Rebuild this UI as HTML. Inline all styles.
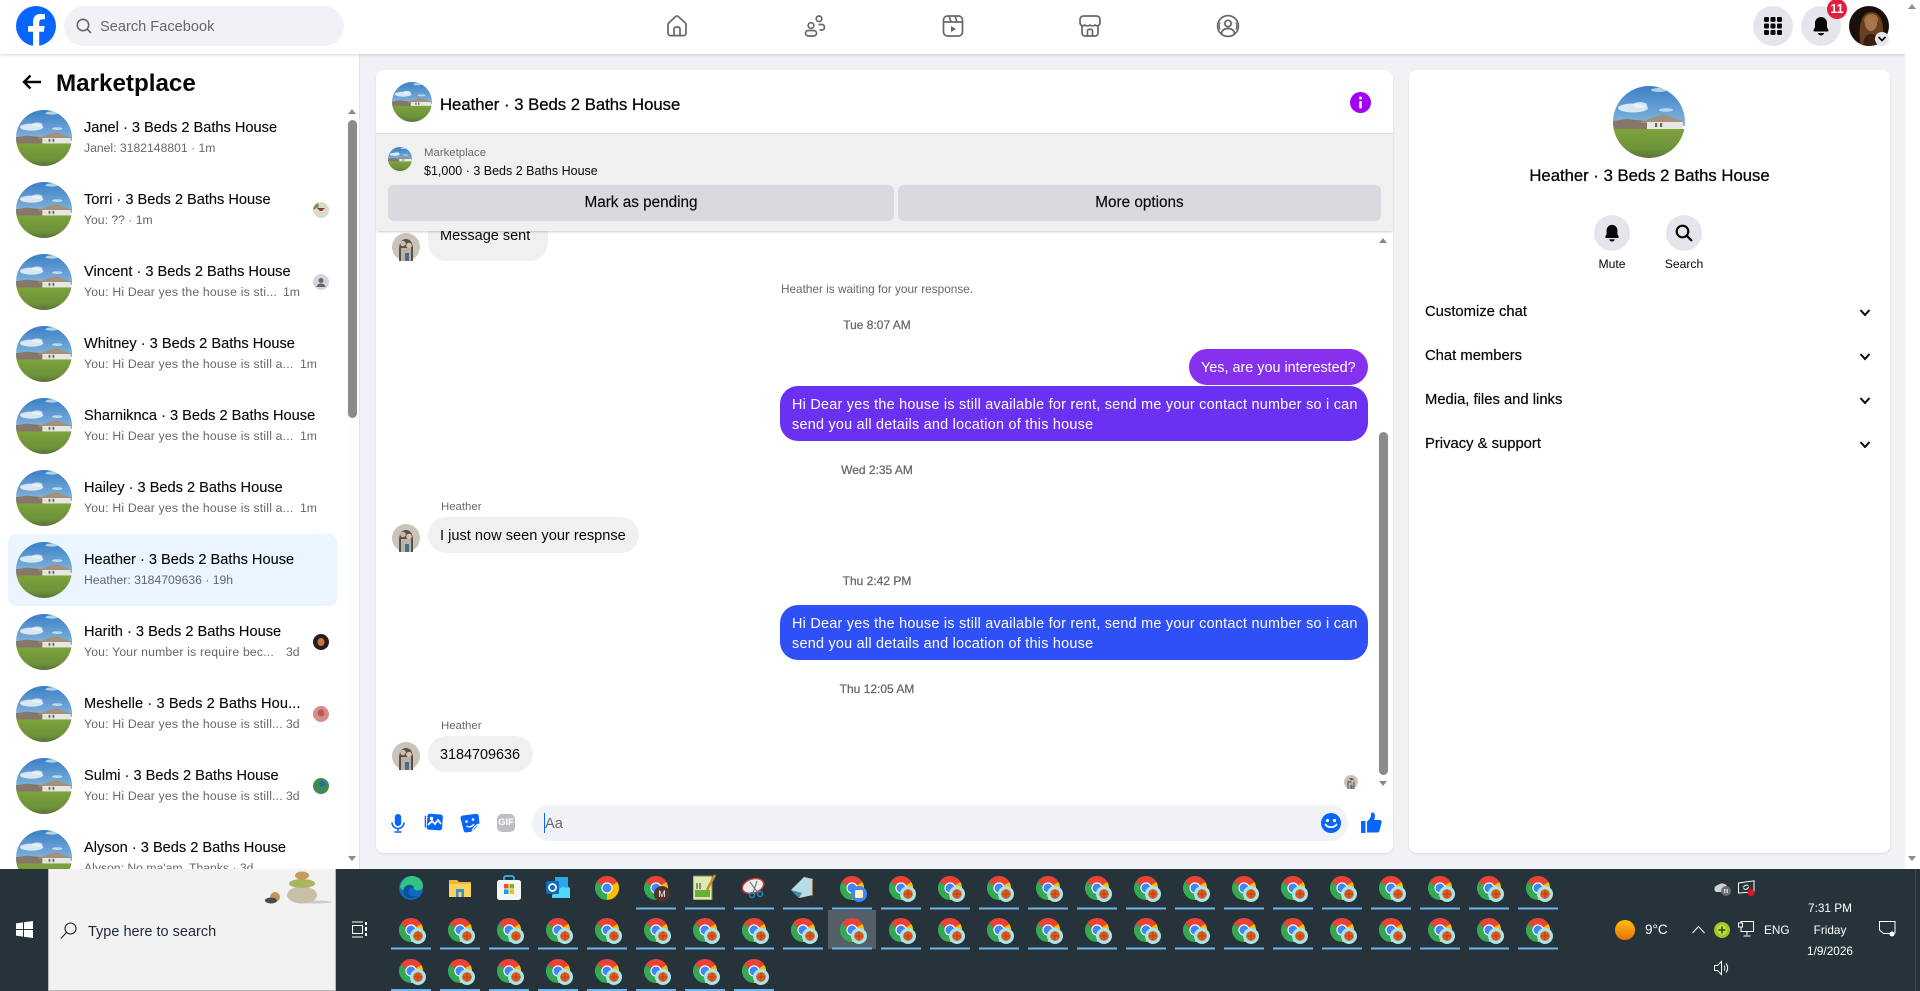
<!DOCTYPE html>
<html lang="en"><head><meta charset="utf-8"><title>Marketplace</title>
<style>
*{box-sizing:border-box}
html,body{margin:0;padding:0;width:1920px;height:991px;overflow:hidden;background:#f0f2f5;font-family:"Liberation Sans",Arial,sans-serif;color:#080809}
.a{position:absolute}
.t{position:absolute;white-space:nowrap;line-height:20px;height:20px}
#hdr{left:0;top:0;width:1905px;height:54px;background:#fff;box-shadow:0 1px 3px rgba(0,0,0,.16);z-index:5}
#side{left:0;top:54px;width:360px;height:815px;background:#fff;border-right:1px solid #e2e4e8;overflow:hidden}
#list{left:0;top:0;width:345px;height:815px;overflow:hidden}
.r{position:absolute;left:0;width:345px;height:72px}
.r svg.av{position:absolute;left:16px;top:8px;width:56px;height:56px}
.r .n{position:absolute;left:84px;top:16px;font-size:14.6px;line-height:20px;white-space:nowrap;color:#080809;-webkit-text-stroke:.12px #080809}
.r .s{position:absolute;left:84px;top:37px;font-size:12.2px;line-height:18px;white-space:nowrap;color:#65676b}
.r .s.w{letter-spacing:.2px}
.r .m{position:absolute;left:283px;top:37px;font-size:12.2px;line-height:18px;color:#65676b}
.mini{position:absolute;left:313px;top:28px;width:16px;height:16px}
.panel{background:#fff;border-radius:8px;box-shadow:0 1px 2px rgba(0,0,0,.1)}
.btn{position:absolute;top:185px;height:36px;background:#d8dadf;border-radius:6px;text-align:center;font-size:15.3px;line-height:36px;color:#080809;-webkit-text-stroke:.15px #080809}
.b{position:absolute;border-radius:18px;font-size:14.4px;line-height:20px;padding:9px 12px 0;white-space:nowrap}
.o{color:#fff}
.g{background:#f0f0f0;color:#080809}
.ts{position:absolute;left:676px;width:402px;text-align:center;font-size:12px;line-height:16px;color:#65676b;white-space:nowrap;-webkit-text-stroke:.25px #65676b}
.lb{position:absolute;left:441px;font-size:11.4px;line-height:16px;color:#65676b}
.rw{position:absolute;left:1425px;font-size:14.8px;line-height:20px;color:#080809;-webkit-text-stroke:.2px #080809}
#tb{left:0;top:869px;width:1920px;height:122px;background:#27333b}
.tt{position:absolute;color:#fff;font-size:12.4px;line-height:16px;white-space:nowrap}
</style></head><body>
<svg width="0" height="0" style="position:absolute">
<defs>
<linearGradient id="sky" x1="0" y1="0" x2="0" y2="1"><stop offset="0" stop-color="#3a80c6"/><stop offset="1" stop-color="#86b6de"/></linearGradient>
<linearGradient id="gr" x1="0" y1="0" x2="0" y2="1"><stop offset="0" stop-color="#7ea33c"/><stop offset=".7" stop-color="#6d9239"/><stop offset="1" stop-color="#5c7139"/></linearGradient>
<clipPath id="cc"><circle cx="36" cy="36" r="36"/></clipPath>
<symbol id="house" viewBox="0 0 72 72"><g clip-path="url(#cc)">
<rect width="72" height="40" fill="url(#sky)"/>
<ellipse cx="20" cy="22" rx="15" ry="4.500" fill="#e4eef6" opacity=".9"/><ellipse cx="27" cy="19" rx="7" ry="3" fill="#eef4f9" opacity=".8"/><ellipse cx="53" cy="24" rx="7" ry="1.800" fill="#cfe2f1" opacity=".8"/><ellipse cx="46" cy="4" rx="8" ry="2" fill="#cfe2f1" opacity=".8"/>
<path d="M0 35L14 33 34 35V44H0z" fill="#85786a"/>
<path d="M28 36L50 28 70 35V37H28z" fill="#a1917f"/>
<rect x="34" y="36" width="36" height="8" fill="#e7e7e1"/>
<rect x="42" y="37" width="2.200" height="4" fill="#66665f"/><rect x="47" y="37" width="2.200" height="4" fill="#66665f"/>
<rect y="43" width="72" height="29" fill="url(#gr)"/></g></symbol>
<symbol id="ch" viewBox="0 0 24 24">
<path d="M12 12L1.600 6A12 12 0 0 1 22.400 6Z" fill="#ea4335"/><path d="M12 12L22.400 6A12 12 0 0 1 12 24Z" fill="#fbbc04"/><path d="M12 12L12 24A12 12 0 0 1 1.600 6Z" fill="#34a853"/>
<circle cx="12" cy="12" r="5.600" fill="#fff"/><circle cx="12" cy="12" r="4.500" fill="#4285f4"/></symbol>
<symbol id="co" viewBox="0 0 36 36" overflow="visible">
<use href="#ch" x="0" y="0" width="24" height="24"/>
<circle cx="19" cy="18" r="8" fill="#a6e5ea"/><circle cx="19" cy="18" r="4.800" fill="#e2591c"/><path d="M14.500 18H23.500M19 13.500V22.500" stroke="#8a3210" stroke-width=".5"/></symbol>
<symbol id="face1" viewBox="0 0 28 28"><circle cx="14" cy="14" r="14" fill="#c9c4b9"/><path d="M7 28V15q1-9 7-9t7 9v13z" fill="#55504a"/><circle cx="11" cy="10.500" r="2.800" fill="#d2b8a2"/><circle cx="17" cy="12.500" r="2.800" fill="#dcc4ae"/><path d="M9 15h10v13H9z" fill="#b8b4ac"/><path d="M13 20h4v8h-4z" fill="#4e6a84"/></symbol>
</defs></svg>

<!-- HEADER -->
<div id="hdr" class="a">
<svg class="a" style="left:16px;top:6px" width="40" height="40" viewBox="0 0 40 40"><circle cx="20" cy="20" r="20" fill="#0866ff"/><path d="M27.800 25.700l.9-5.700h-5.500v-3.700c0-1.600.8-3.100 3.200-3.100H29V8.300s-2.300-.4-4.400-.4c-4.500 0-7.500 2.700-7.500 7.700V20h-5v5.700h5V40h6.100V25.700z" fill="#fff"/></svg>
<div class="a" style="left:64px;top:6px;width:280px;height:40px;background:#f0f2f5;border-radius:20px"></div>
<svg class="a" style="left:76px;top:18px" width="16" height="16" viewBox="0 0 16 16" fill="none" stroke="#65676b" stroke-width="1.600"><circle cx="7" cy="7" r="5.700"/><path d="M11.200 11.200L15 15"/></svg>
<div class="t" style="left:100px;top:17px;font-size:14.600px;color:#65676b">Search Facebook</div>
<svg class="a" style="left:665px;top:14px" width="24" height="24" viewBox="0 0 24 24" fill="none" stroke="#65676b" stroke-width="1.700"><path d="M10.600 2.600a2 2 0 0 1 2.800 0l6.600 6a3 3 0 0 1 1 2.200V19a2.600 2.600 0 0 1-2.600 2.600H5.600A2.600 2.600 0 0 1 3 19v-8.200a3 3 0 0 1 1-2.200z"/><path d="M9 21.600V15a2 2 0 0 1 2-2h2a2 2 0 0 1 2 2v6.600"/></svg>
<svg class="a" style="left:803px;top:14px" width="24" height="24" viewBox="0 0 24 24" fill="none" stroke="#65676b" stroke-width="1.700"><circle cx="8" cy="11.500" r="2.800"/><circle cx="16" cy="4.800" r="2.800"/><rect x="2.500" y="16.500" width="11" height="5.500" rx="2.700"/><path d="M15.500 10.500H19a2.400 2.400 0 0 1 2.400 2.400v.7a2.400 2.400 0 0 1-2.400 2.400h-2.500"/></svg>
<svg class="a" style="left:941px;top:14px" width="24" height="24" viewBox="0 0 24 24" fill="none" stroke="#65676b" stroke-width="1.700"><rect x="2.500" y="2" width="19" height="20" rx="4"/><path d="M2.500 8h19M8 2l2 6M14 2l2 6"/><path d="M10 12l5 3-5 3z" fill="#65676b" stroke="none"/></svg>
<svg class="a" style="left:1078px;top:14px" width="24" height="24" viewBox="0 0 24 24" fill="none" stroke="#65676b" stroke-width="1.700"><path d="M5.500 2h13A3.500 3.500 0 0 1 22 6v3a3 3 0 0 1-5 2 3.800 3.800 0 0 1-5 0 3.800 3.800 0 0 1-5 0 3 3 0 0 1-5-2V6a3.500 3.500 0 0 1 3.500-4z"/><path d="M4 12v7a3 3 0 0 0 3 3h10a3 3 0 0 0 3-3v-7"/><path d="M9.500 22v-5a1.600 1.600 0 0 1 1.600-1.600h1.800a1.600 1.600 0 0 1 1.600 1.600v5"/></svg>
<svg class="a" style="left:1216px;top:14px" width="24" height="24" viewBox="0 0 24 24" fill="none" stroke="#65676b" stroke-width="1.700"><circle cx="12" cy="12" r="10.400"/><circle cx="12" cy="9.500" r="3.200"/><path d="M5.500 19.500c.5-3.500 3-5 6.500-5s6 1.500 6.500 5"/><path d="M4 8.500c-1 2-1 5 0 7M20 8.500c1 2 1 5 0 7" stroke-width="1.300"/></svg>
<div class="a" style="left:1753px;top:6px;width:40px;height:40px;border-radius:50%;background:#e4e6eb"></div>
<svg class="a" style="left:1763px;top:16px" width="20" height="20" viewBox="0 0 20 20" fill="#080809"><rect x="1" y="1" width="5" height="5" rx="1.200"/><rect x="7.500" y="1" width="5" height="5" rx="1.200"/><rect x="14" y="1" width="5" height="5" rx="1.200"/><rect x="1" y="7.500" width="5" height="5" rx="1.200"/><rect x="7.500" y="7.500" width="5" height="5" rx="1.200"/><rect x="14" y="7.500" width="5" height="5" rx="1.200"/><rect x="1" y="14" width="5" height="5" rx="1.200"/><rect x="7.500" y="14" width="5" height="5" rx="1.200"/><rect x="14" y="14" width="5" height="5" rx="1.200"/></svg>
<div class="a" style="left:1801px;top:6px;width:40px;height:40px;border-radius:50%;background:#e4e6eb"></div>
<svg class="a" style="left:1811px;top:16px" width="20" height="20" viewBox="0 0 20 20" fill="#080809"><path d="M10 1a6 6 0 0 0-6 6v3.500c0 1.800-1.500 2.500-1.500 4 0 .6.400 1 1 1h13c.6 0 1-.4 1-1 0-1.500-1.500-2.200-1.500-4V7a6 6 0 0 0-6-6z"/><path d="M7 17h6a3 2.500 0 0 1-6 0z"/></svg>
<svg class="a" style="left:1849px;top:6px" width="40" height="40" viewBox="0 0 40 40"><defs><clipPath id="cp"><circle cx="20" cy="20" r="20"/></clipPath></defs><g clip-path="url(#cp)"><rect width="40" height="40" fill="#1a0f0b"/><path d="M12 40C9 28 10 6 22 6s14 16 11 34z" fill="#6a3f20"/><ellipse cx="22" cy="17" rx="6" ry="8" fill="#a8754f"/><path d="M15 17c0-7 4-9 8-9s7 3 6 9c-2-5-4-6-7-6s-5 2-7 6z" fill="#a87238"/><path d="M14 40c0-8 3-12 8-12s8 4 8 12z" fill="#3a2014"/></g></svg>
<div class="a" style="left:1875px;top:32px;width:14px;height:14px;border-radius:50%;background:#e4e6eb"></div>
<svg class="a" style="left:1877px;top:35px" width="10" height="8" viewBox="0 0 10 8" fill="none" stroke="#080809" stroke-width="1.700"><path d="M1.500 2l3.500 3.500L8.500 2"/></svg>
<div class="a" style="left:1827px;top:-1px;width:20px;height:20px;border-radius:50%;background:#e41e3f;color:#fff;font-size:12.500px;font-weight:700;line-height:20px;text-align:center">11</div>
</div>

<!-- SIDEBAR -->
<div id="side" class="a">
<svg class="a" style="left:22px;top:20px" width="20" height="16" viewBox="0 0 20 16" fill="none" stroke="#080809" stroke-width="2.400"><path d="M19 8H2.500M8.500 1.500L2 8l6.500 6.500"/></svg>
<div class="t" style="left:56px;top:16px;height:28px;line-height:28px;font-size:24.200px;font-weight:700;color:#080809">Marketplace</div>
<div id="list" class="a" style="top:0">
<div class="r" style="top:48px"><svg class="av"><use href="#house" width="56" height="56"/></svg><div class="n">Janel · 3 Beds 2 Baths House</div><div class="s">Janel: 3182148801 · 1m</div></div>
<div class="r" style="top:120px"><svg class="av"><use href="#house" width="56" height="56"/></svg><div class="n">Torri · 3 Beds 2 Baths House</div><div class="s">You: ?? · 1m</div><svg class="mini" viewBox="0 0 16 16"><circle cx="8" cy="8" r="8" fill="#ded9cf"/><path d="M4 6h8l-3 3H7z" fill="#8c3a2c"/><path d="M0 8a8 8 0 0 1 5-7l1 4z" fill="#7d8a5a"/></svg></div>
<div class="r" style="top:192px"><svg class="av"><use href="#house" width="56" height="56"/></svg><div class="n">Vincent · 3 Beds 2 Baths House</div><div class="s w">You: Hi Dear yes the house is sti...</div><div class="m">1m</div><svg class="mini" viewBox="0 0 16 16"><circle cx="8" cy="8" r="8" fill="#d3d6db"/><circle cx="8" cy="6.500" r="2.500" fill="#65676b"/><path d="M3.500 13c.5-2.500 2-3.500 4.500-3.500s4 1 4.500 3.500z" fill="#65676b"/></svg></div>
<div class="r" style="top:264px"><svg class="av"><use href="#house" width="56" height="56"/></svg><div class="n">Whitney · 3 Beds 2 Baths House</div><div class="s w">You: Hi Dear yes the house is still a...</div><div class="m" style="left:300px">1m</div></div>
<div class="r" style="top:336px"><svg class="av"><use href="#house" width="56" height="56"/></svg><div class="n">Sharniknca · 3 Beds 2 Baths House</div><div class="s w">You: Hi Dear yes the house is still a...</div><div class="m" style="left:300px">1m</div></div>
<div class="r" style="top:408px"><svg class="av"><use href="#house" width="56" height="56"/></svg><div class="n">Hailey · 3 Beds 2 Baths House</div><div class="s w">You: Hi Dear yes the house is still a...</div><div class="m" style="left:300px">1m</div></div>
<div class="r" style="top:480px"><div class="a" style="left:8px;top:0;width:329px;height:72px;background:#ebf5ff;border-radius:8px"></div><svg class="av"><use href="#house" width="56" height="56"/></svg><div class="n">Heather · 3 Beds 2 Baths House</div><div class="s">Heather: 3184709636 · 19h</div></div>
<div class="r" style="top:552px"><svg class="av"><use href="#house" width="56" height="56"/></svg><div class="n">Harith · 3 Beds 2 Baths House</div><div class="s w">You: Your number is require bec...</div><div class="m" style="left:286px">3d</div><svg class="mini" viewBox="0 0 16 16"><circle cx="8" cy="8" r="8" fill="#2a1e18"/><ellipse cx="8" cy="8" rx="3.500" ry="4" fill="#c8763a"/></svg></div>
<div class="r" style="top:624px"><svg class="av"><use href="#house" width="56" height="56"/></svg><div class="n" style="letter-spacing:.1px">Meshelle · 3 Beds 2 Baths Hou...</div><div class="s w">You: Hi Dear yes the house is still...</div><div class="m" style="left:286px">3d</div><svg class="mini" viewBox="0 0 16 16"><circle cx="8" cy="8" r="8" fill="#d88d8d"/><circle cx="8" cy="7" r="3.500" fill="#b85a5a"/></svg></div>
<div class="r" style="top:696px"><svg class="av"><use href="#house" width="56" height="56"/></svg><div class="n">Sulmi · 3 Beds 2 Baths House</div><div class="s w">You: Hi Dear yes the house is still...</div><div class="m" style="left:286px">3d</div><svg class="mini" viewBox="0 0 16 16"><circle cx="8" cy="8" r="8" fill="#3f8a55"/><circle cx="9" cy="6" r="3" fill="#2f6aa0"/></svg></div>
<div class="r" style="top:768px"><svg class="av"><use href="#house" width="56" height="56"/></svg><div class="n">Alyson · 3 Beds 2 Baths House</div><div class="s">Alyson: No ma'am. Thanks · 3d</div></div>
</div>
<div class="a" style="left:347px;top:48px;width:12px;height:767px;background:#fdfdfd"></div>
<div class="a" style="left:348px;top:66px;width:9px;height:298px;background:#8b8b8b;border-radius:5px"></div>
<div class="a" style="left:348px;top:55px;width:0;height:0;border-left:4.500px solid transparent;border-right:4.500px solid transparent;border-bottom:5px solid #8b8b8b"></div>
<div class="a" style="left:348px;top:802px;width:0;height:0;border-left:4.500px solid transparent;border-right:4.500px solid transparent;border-top:5px solid #8b8b8b"></div>
</div>

<!-- CENTER PANEL -->
<div class="a panel" style="left:376px;top:70px;width:1017px;height:783px"></div>
<svg class="a" style="left:392px;top:82px" width="40" height="40"><use href="#house" width="40" height="40"/></svg>
<div class="t" style="left:440px;top:95px;font-size:16.700px;color:#080809;-webkit-text-stroke:.3px #080809">Heather · 3 Beds 2 Baths House</div>
<svg class="a" style="left:1350px;top:92px" width="21" height="21" viewBox="0 0 21 21"><circle cx="10.500" cy="10.500" r="10.500" fill="#a100f2"/><circle cx="10.500" cy="6" r="1.500" fill="#fff"/><rect x="9.200" y="9" width="2.600" height="7.500" rx="1" fill="#fff"/></svg>
<div class="a" style="left:376px;top:133px;width:1017px;height:98px;background:#f0f0f0;border-top:1px solid #dcdde0;box-shadow:0 2px 2px -1px rgba(0,0,0,.2);z-index:2">
<svg class="a" style="left:12px;top:13px" width="24" height="24"><use href="#house" width="24" height="24"/></svg>
<div class="t" style="left:48px;top:9px;font-size:11.400px;color:#65676b">Marketplace</div>
<div class="t" style="left:48px;top:27px;font-size:12.500px;color:#080809">$1,000 · 3 Beds 2 Baths House</div>
</div>
<div class="btn" style="left:388px;width:506px;z-index:3">Mark as pending</div>
<div class="btn" style="left:898px;width:483px;z-index:3">More options</div>

<!-- messages -->
<div class="a g" style="left:428px;top:212px;width:120px;height:49px;border-radius:18px;font-size:14.500px;padding:14px 12px 0;line-height:20px;white-space:nowrap">Message sent</div>
<svg class="a" style="left:392px;top:233px" width="28" height="28"><use href="#face1" width="28" height="28"/></svg>
<div class="a" style="left:780px;top:281px;width:194px;text-align:center;font-size:11.800px;line-height:16px;color:#65676b;white-space:nowrap">Heather is waiting for your response.</div>
<div class="ts" style="top:317px">Tue 8:07 AM</div>
<div class="b o" style="left:1189px;top:349px;width:179px;height:36px;background:#8631ee">Yes, are you interested?</div>
<div class="b o" style="left:780px;top:386px;width:588px;height:55px;background:#6b31f2;letter-spacing:.25px">Hi Dear yes the house is still available for rent, send me your contact number so i can<br>send you all details and location of this house</div>
<div class="ts" style="top:462px">Wed 2:35 AM</div>
<div class="lb" style="top:499px">Heather</div>
<svg class="a" style="left:392px;top:524px" width="28" height="28"><use href="#face1" width="28" height="28"/></svg>
<div class="b g" style="left:428px;top:517px;width:211px;height:36px;font-size:14.600px">I just now seen your respnse</div>
<div class="ts" style="top:573px">Thu 2:42 PM</div>
<div class="b o" style="left:780px;top:605px;width:588px;height:55px;background:#2f50f6;letter-spacing:.25px">Hi Dear yes the house is still available for rent, send me your contact number so i can<br>send you all details and location of this house</div>
<div class="ts" style="top:681px">Thu 12:05 AM</div>
<div class="lb" style="top:718px">Heather</div>
<svg class="a" style="left:392px;top:742px" width="28" height="28"><use href="#face1" width="28" height="28"/></svg>
<div class="b g" style="left:428px;top:736px;width:105px;height:36px">3184709636</div>
<svg class="a" style="left:1344px;top:775px" width="14" height="14"><use href="#face1" width="14" height="14"/></svg>
<div class="a" style="left:1379px;top:432px;width:9px;height:343px;background:#8b8b8b;border-radius:5px"></div>
<div class="a" style="left:1379px;top:238px;width:0;height:0;border-left:4.500px solid transparent;border-right:4.500px solid transparent;border-bottom:5px solid #8b8b8b"></div>
<div class="a" style="left:1379px;top:781px;width:0;height:0;border-left:4.500px solid transparent;border-right:4.500px solid transparent;border-top:5px solid #8b8b8b"></div>

<!-- composer -->
<svg class="a" style="left:388px;top:813px" width="20" height="20" viewBox="0 0 20 20" fill="#0866ff"><rect x="6.800" y="1" width="6.400" height="12" rx="3.200"/><path d="M4 9.500a6 6 0 0 0 12 0M10 15.500v2.500M6.500 19h7" fill="none" stroke="#0866ff" stroke-width="1.600"/></svg>
<svg class="a" style="left:424px;top:813px" width="20" height="20" viewBox="0 0 20 20"><path d="M2 2.500L.7 3v11l1.300 1z" fill="#0866ff"/><rect x="3" y="1" width="15.500" height="16" rx="2.500" fill="#0866ff" transform="rotate(4 10 9)"/><circle cx="7.500" cy="5.500" r="1.700" fill="#fff"/><path d="M4 12l4-4 3 3 3-4 3 4" fill="none" stroke="#fff" stroke-width="1.800"/></svg>
<svg class="a" style="left:460px;top:813px" width="20" height="20" viewBox="0 0 20 20"><path d="M3 2.500L16 .8a2.500 2.500 0 0 1 2.800 2.300l.7 7.500-7 8-6 .8a2.500 2.500 0 0 1-2.800-1.500L.7 6a2.500 2.500 0 0 1 2.300-3.500z" fill="#0866ff"/><circle cx="6.500" cy="8.500" r="1.300" fill="#fff"/><circle cx="13" cy="6.500" r="1.300" fill="#fff"/><path d="M6.500 13c2.500 1.500 5.500 1 7.500-2M12 19c1-4 3-6.500 7-8" fill="none" stroke="#fff" stroke-width="1.300"/></svg>
<div class="a" style="left:497px;top:814px;width:18px;height:18px;border-radius:5px;background:#bcc0c4;color:#fff;font-size:9.500px;font-weight:700;line-height:18px;text-align:center">GIF</div>
<div class="a" style="left:532px;top:805px;width:816px;height:36px;background:#f0f2f5;border-radius:18px"></div>
<div class="a" style="left:544px;top:813px;width:1px;height:20px;background:#0866ff"></div>
<div class="t" style="left:545px;top:814px;font-size:14.600px;color:#65676b">Aa</div>
<svg class="a" style="left:1321px;top:813px" width="20" height="20" viewBox="0 0 20 20"><circle cx="10" cy="10" r="10" fill="#0866ff"/><circle cx="6.500" cy="7.500" r="1.600" fill="#fff"/><circle cx="13.500" cy="7.500" r="1.600" fill="#fff"/><path d="M4.500 11.500c2 3.500 9 3.500 11 0" fill="none" stroke="#fff" stroke-width="1.800" stroke-linecap="round"/></svg>
<svg class="a" style="left:1360px;top:812px" width="22" height="22" viewBox="0 0 22 22" fill="#0866ff"><rect x="1" y="9" width="4.500" height="12" rx=".5"/><path d="M7 20.500V9.500c1.500-1 4-4 4-6.500 0-2 .5-2.500 1.500-2.500 1.500 0 2.500 1.500 2.500 3.500 0 1.500-.5 3-1 4h5.500c1.700 0 2.500 1.300 2 2.700l-2 8A2.300 2.300 0 0 1 17.300 20.500z"/></svg>

<!-- RIGHT PANEL -->
<div class="a panel" style="left:1409px;top:70px;width:481px;height:783px"></div>
<svg class="a" style="left:1613px;top:86px" width="72" height="72"><use href="#house" width="72" height="72"/></svg>
<div class="a" style="left:1409px;top:165px;width:481px;text-align:center;font-size:16.700px;line-height:22px;color:#080809;-webkit-text-stroke:.3px #080809">Heather · 3 Beds 2 Baths House</div>
<div class="a" style="left:1594px;top:215px;width:36px;height:36px;border-radius:50%;background:#e4e6eb"></div>
<div class="a" style="left:1666px;top:215px;width:36px;height:36px;border-radius:50%;background:#e4e6eb"></div>
<svg class="a" style="left:1603px;top:224px" width="18" height="18" viewBox="0 0 20 20" fill="#080809"><path d="M10 1a6 6 0 0 0-6 6v3.500c0 1.800-1.500 2.500-1.500 4 0 .6.400 1 1 1h13c.6 0 1-.4 1-1 0-1.500-1.500-2.200-1.500-4V7a6 6 0 0 0-6-6z"/><path d="M7 17h6a3 2.500 0 0 1-6 0z"/></svg>
<svg class="a" style="left:1675px;top:224px" width="18" height="18" viewBox="0 0 18 18" fill="none" stroke="#080809" stroke-width="2.200"><circle cx="7.500" cy="7.500" r="5.800"/><path d="M12 12l5 5"/></svg>
<div class="a" style="left:1572px;top:256px;width:80px;text-align:center;font-size:12.200px;line-height:16px">Mute</div>
<div class="a" style="left:1644px;top:256px;width:80px;text-align:center;font-size:12.200px;line-height:16px">Search</div>
<div class="rw" style="top:302px">Customize chat</div>
<div class="rw" style="top:346px">Chat members</div>
<div class="rw" style="top:390px">Media, files and links</div>
<div class="rw" style="top:434px">Privacy &amp; support</div>
<svg class="a" style="left:1859px;top:308px" width="12" height="140" viewBox="0 0 12 140" fill="none" stroke="#080809" stroke-width="2"><path d="M1.500 2L6 7l4.500-5M1.500 46L6 51l4.500-5M1.500 90L6 95l4.500-5M1.500 134L6 139l4.500-5"/></svg>

<!-- page scrollbar -->
<div class="a" style="left:1905px;top:0;width:15px;height:869px;background:#fff;z-index:6"></div>
<div class="a" style="left:1908px;top:4px;width:0;height:0;border-left:4.500px solid transparent;border-right:4.500px solid transparent;border-bottom:5px solid #8b8b8b;z-index:7"></div>
<div class="a" style="left:1908px;top:856px;width:0;height:0;border-left:4.500px solid transparent;border-right:4.500px solid transparent;border-top:5px solid #8b8b8b;z-index:7"></div>

<!-- TASKBAR -->
<div id="tb" class="a">
<svg class="a" style="left:16px;top:52px" width="17" height="17" viewBox="0 0 17 17" fill="#fff"><path d="M0 2.400l7-1v6.600H0zM8 1.200l9-1.200v8H8zM0 9h7v6.600l-7-1zM8 9h9v8l-9-1.200z"/></svg>
<div class="a" style="left:48px;top:0;width:288px;height:122px;background:#f2f2f2;border-left:1px solid #b8b8b8;border-right:1px solid #b8b8b8;border-bottom:1px solid #b8b8b8"></div>
<svg class="a" style="left:60px;top:53px" width="17" height="17" viewBox="0 0 17 17" fill="none" stroke="#222" stroke-width="1.100"><circle cx="10.500" cy="6.500" r="5.500"/><path d="M6.500 10.500L.8 16.500"/></svg>
<div class="t" style="left:88px;top:53px;font-size:14.500px;color:#1d2a36">Type here to search</div>
<svg class="a" style="left:264px;top:2px" width="68" height="34" viewBox="0 0 68 34"><ellipse cx="50" cy="31" rx="18" ry="1.500" fill="#ccc"/><ellipse cx="38" cy="24" rx="15" ry="8.500" fill="#c7bfa6"/><ellipse cx="38" cy="12.500" rx="13" ry="4.500" fill="#aab35f"/><ellipse cx="38" cy="4.500" rx="7" ry="4" fill="#c99a5b"/><ellipse cx="11" cy="26" rx="5" ry="5" fill="#c69558"/><ellipse cx="7" cy="29.500" rx="6" ry="3" fill="#4a4a4a"/></svg>
<svg class="a" style="left:352px;top:52px" width="16" height="17" viewBox="0 0 16 17" fill="none" stroke="#fff" stroke-width="1.100"><path d="M0 1h11M0 16h11M.5 4.500h10v8H.5z"/><path d="M14 1v3M14 6v4M14 12v3" stroke-width="2"/></svg>

<!-- row 0 pinned -->
<svg class="a" style="left:399px;top:7px" width="24" height="24" viewBox="0 0 24 24"><circle cx="12" cy="12" r="12" fill="#0f6cbd"/><path d="M1 11C2 4 8 0 13 0c6 0 11 4 11 10 0 3-3 4.500-5.500 4.500S14 13 15 11c-2-4-10-3-11 4-.5-2-2-2-3-4z" fill="#33c481"/><path d="M7 21c-4-3-3-9 1-11 3-1.500 6 0 7 2-3-1-6 1-5.500 4 .5 4 6 6 10 3-3 4-9 4-12.500 2z" fill="#0b4f9e"/></svg>
<svg class="a" style="left:449px;top:9px" width="22" height="20" viewBox="0 0 22 20"><path d="M0 2h8l2 2h12v15H0z" fill="#f2b53a"/><rect x="0" y="6" width="22" height="13" fill="#fbd25c"/><rect x="7" y="11" width="8" height="8" fill="#3b8ed0"/><rect x="9.500" y="14" width="3" height="5" fill="#fbd25c"/></svg>
<svg class="a" style="left:497px;top:6px" width="24" height="25" viewBox="0 0 24 25"><path d="M7 6V3a2 2 0 0 1 2-2h6a2 2 0 0 1 2 2v3" fill="none" stroke="#29b6f6" stroke-width="1.800"/><rect y="5" width="24" height="20" rx="2.500" fill="#f5f5f5"/><rect x="7" y="9" width="4.500" height="4.500" fill="#f25022"/><rect x="12.500" y="9" width="4.500" height="4.500" fill="#7fba00"/><rect x="7" y="14.500" width="4.500" height="4.500" fill="#00a4ef"/><rect x="12.500" y="14.500" width="4.500" height="4.500" fill="#ffb900"/></svg>
<svg class="a" style="left:546px;top:7px" width="24" height="23" viewBox="0 0 24 23"><path d="M9 1h13v9l2 2v10H9z" fill="#28a8ea"/><path d="M6 19l10-8 8 1v10H6z" fill="#50d9ff"/><rect y="5" width="13" height="13" rx="1" fill="#0f6cbd"/><circle cx="6.500" cy="11.500" r="3.500" fill="none" stroke="#fff" stroke-width="1.700"/></svg>
<svg class="a" style="left:595px;top:7px" width="24" height="24"><use href="#ch" width="24" height="24"/></svg>
<svg class="a" style="left:644px;top:7px" width="26" height="26"><use href="#ch" width="24" height="24"/><circle cx="18" cy="18" r="8" fill="#4e342e"/><text x="18" y="21" font-size="9" fill="#fff" text-anchor="middle" font-family="Liberation Sans">M</text></svg>
<svg class="a" style="left:693px;top:5px" width="24" height="26" viewBox="0 0 24 26"><rect y="2" width="19" height="24" fill="#dfe8b0" stroke="#7a8a5a"/><rect x="2" y="16" width="15" height="7" fill="#66b032"/><path d="M4 9v6M7 9v6" stroke="#333"/><path d="M14 16L22 1" stroke="#c98a20" stroke-width="2.500"/></svg>
<svg class="a" style="left:742px;top:8px" width="24" height="22" viewBox="0 0 24 22"><ellipse cx="11" cy="9" rx="11" ry="7" fill="#eee" stroke="#c23a3a" stroke-width="1.500" transform="rotate(-18 11 9)"/><path d="M8 5l8 11M15 4L11 16" stroke="#666"/><circle cx="10" cy="18" r="2.500" fill="none" stroke="#1e88c8" stroke-width="1.500"/><circle cx="18" cy="17" r="2.500" fill="none" stroke="#1e88c8" stroke-width="1.500"/></svg>
<svg class="a" style="left:791px;top:7px" width="24" height="24" viewBox="0 0 24 24"><path d="M0 14L13 1l9 2v16L8 22z" fill="#b9dbe8"/><path d="M22 3v16l-1 2V4z" fill="#9b7c50"/><path d="M0 14l8 8 3-5z" fill="#3e90ad"/></svg>
<svg class="a" style="left:840px;top:7px" width="28" height="28"><use href="#ch" width="24" height="24"/><circle cx="19" cy="18" r="8" fill="#4285f4"/><rect x="15" y="14" width="8" height="8" rx="1.500" fill="#fff3c4"/></svg>
<div class="a" style="left:828px;top:41px;width:48px;height:39px;background:#545f67"></div>

<svg class="a" style="left:0;top:0" width="1600" height="122" viewBox="0 0 1600 122">
<!-- row 0 -->
<use href="#co" x="889" y="7" width="36" height="36"/><use href="#co" x="938" y="7" width="36" height="36"/><use href="#co" x="987" y="7" width="36" height="36"/><use href="#co" x="1036" y="7" width="36" height="36"/><use href="#co" x="1085" y="7" width="36" height="36"/><use href="#co" x="1134" y="7" width="36" height="36"/><use href="#co" x="1183" y="7" width="36" height="36"/><use href="#co" x="1232" y="7" width="36" height="36"/><use href="#co" x="1281" y="7" width="36" height="36"/><use href="#co" x="1330" y="7" width="36" height="36"/><use href="#co" x="1379" y="7" width="36" height="36"/><use href="#co" x="1428" y="7" width="36" height="36"/><use href="#co" x="1477" y="7" width="36" height="36"/><use href="#co" x="1526" y="7" width="36" height="36"/>
<!-- row 1 -->
<use href="#co" x="399" y="49" width="36" height="36"/><use href="#co" x="448" y="49" width="36" height="36"/><use href="#co" x="497" y="49" width="36" height="36"/><use href="#co" x="546" y="49" width="36" height="36"/><use href="#co" x="595" y="49" width="36" height="36"/><use href="#co" x="644" y="49" width="36" height="36"/><use href="#co" x="693" y="49" width="36" height="36"/><use href="#co" x="742" y="49" width="36" height="36"/><use href="#co" x="791" y="49" width="36" height="36"/><use href="#co" x="840" y="49" width="36" height="36"/><use href="#co" x="889" y="49" width="36" height="36"/><use href="#co" x="938" y="49" width="36" height="36"/><use href="#co" x="987" y="49" width="36" height="36"/><use href="#co" x="1036" y="49" width="36" height="36"/><use href="#co" x="1085" y="49" width="36" height="36"/><use href="#co" x="1134" y="49" width="36" height="36"/><use href="#co" x="1183" y="49" width="36" height="36"/><use href="#co" x="1232" y="49" width="36" height="36"/><use href="#co" x="1281" y="49" width="36" height="36"/><use href="#co" x="1330" y="49" width="36" height="36"/><use href="#co" x="1379" y="49" width="36" height="36"/><use href="#co" x="1428" y="49" width="36" height="36"/><use href="#co" x="1477" y="49" width="36" height="36"/><use href="#co" x="1526" y="49" width="36" height="36"/>
<!-- row 2 -->
<use href="#co" x="399" y="90" width="36" height="36"/><use href="#co" x="448" y="90" width="36" height="36"/><use href="#co" x="497" y="90" width="36" height="36"/><use href="#co" x="546" y="90" width="36" height="36"/><use href="#co" x="595" y="90" width="36" height="36"/><use href="#co" x="644" y="90" width="36" height="36"/><use href="#co" x="693" y="90" width="36" height="36"/><use href="#co" x="742" y="90" width="36" height="36"/>
<!-- underlines -->
<path d="M636 39.500h40m9 0h40m9 0h40m9 0h40m9 0h40m9 0h40m9 0h40m9 0h40m9 0h40m9 0h40m9 0h40m9 0h40m9 0h40m9 0h40m9 0h40m9 0h40m9 0h40m9 0h40m9 0h40" stroke="#6fb5e6" stroke-width="2" fill="none"/>
<path d="M391 79.500h40m9 0h40m9 0h40m9 0h40m9 0h40m9 0h40m9 0h40m9 0h40m9 0h40m9 0h40m9 0h40m9 0h40m9 0h40m9 0h40m9 0h40m9 0h40m9 0h40m9 0h40m9 0h40m9 0h40m9 0h40m9 0h40m9 0h40m9 0h40" stroke="#6fb5e6" stroke-width="2" fill="none"/>
<path d="M391 121h40m9 0h40m9 0h40m9 0h40m9 0h40m9 0h40m9 0h40m9 0h40" stroke="#6fb5e6" stroke-width="2" fill="none"/>
</svg>

<!-- tray -->
<svg class="a" style="left:1615px;top:51px" width="20" height="20" viewBox="0 0 20 20"><defs><linearGradient id="sun" x1="0" y1="0" x2="0" y2="1"><stop offset="0" stop-color="#ffc107"/><stop offset="1" stop-color="#e8700e"/></linearGradient></defs><circle cx="10" cy="10" r="10" fill="url(#sun)"/></svg>
<div class="tt" style="left:1645px;top:53px;font-size:13.500px">9°C</div>
<svg class="a" style="left:1692px;top:56px" width="13" height="9" viewBox="0 0 13 9" fill="none" stroke="#fff" stroke-width="1"><path d="M.5 8L6.500 1.500 12.500 8"/></svg>
<svg class="a" style="left:1714px;top:13px" width="17" height="14" viewBox="0 0 17 14"><path d="M1 9a4 4 0 0 1 3-6 6 6 0 0 1 9 1v6H2z" fill="#cfd3d6"/><circle cx="12" cy="9" r="5" fill="#6b7074"/><path d="M10.800 7v4M13.200 7v4" stroke="#fff"/></svg>
<svg class="a" style="left:1738px;top:11px" width="18" height="17" viewBox="0 0 18 17" fill="none" stroke="#fff"><path d="M.5 3L16 .8V12L.5 13z"/><path d="M5.500 7.500a3 3 0 0 1 5-1.500M10.500 7a3 3 0 0 1-5 1.500"/><circle cx="13" cy="12.500" r="3.500" fill="#e81123" stroke="none"/></svg>
<svg class="a" style="left:1714px;top:53px" width="16" height="16" viewBox="0 0 16 16"><circle cx="8" cy="8" r="8" fill="#9acb2c"/><circle cx="8" cy="8" r="5" fill="#e9d22a"/><path d="M8 4.500v7M4.500 8h7" stroke="#1f7a2c" stroke-width="2"/></svg>
<svg class="a" style="left:1738px;top:52px" width="16" height="16" viewBox="0 0 16 16" fill="none" stroke="#fff"><rect x="3" y=".5" width="12.500" height="10"/><path d="M9 11v3M5.500 15h7"/><rect x=".5" y="2" width="4" height="4" fill="#27333b"/></svg>
<div class="tt" style="left:1764px;top:53px;font-size:11.800px">ENG</div>
<div class="tt" style="left:1780px;top:31px;width:100px;text-align:center;font-size:11.800px">7:31 PM</div>
<div class="tt" style="left:1780px;top:53px;width:100px;text-align:center;font-size:11.800px">Friday</div>
<div class="tt" style="left:1780px;top:74px;width:100px;text-align:center;font-size:11.800px">1/9/2026</div>
<svg class="a" style="left:1879px;top:52px" width="17" height="17" viewBox="0 0 17 17" fill="none" stroke="#fff"><path d="M12 12.500H4.500L.5 9V.5h15.500v11.500l-3 1.500"/><circle cx="13" cy="13" r="2.500" fill="#fff" stroke="none"/></svg>
<svg class="a" style="left:1714px;top:91px" width="16" height="16" viewBox="0 0 16 16" fill="none" stroke="#fff"><path d="M.5 5.500h3l4-4v13l-4-4h-3z"/><path d="M10 5.500a4 4 0 0 1 0 5M12 3.500a7 7 0 0 1 0 9"/></svg>
<div class="a" style="left:1915px;top:0;width:1px;height:122px;background:#3e4a52"></div>
</div>
</body></html>
